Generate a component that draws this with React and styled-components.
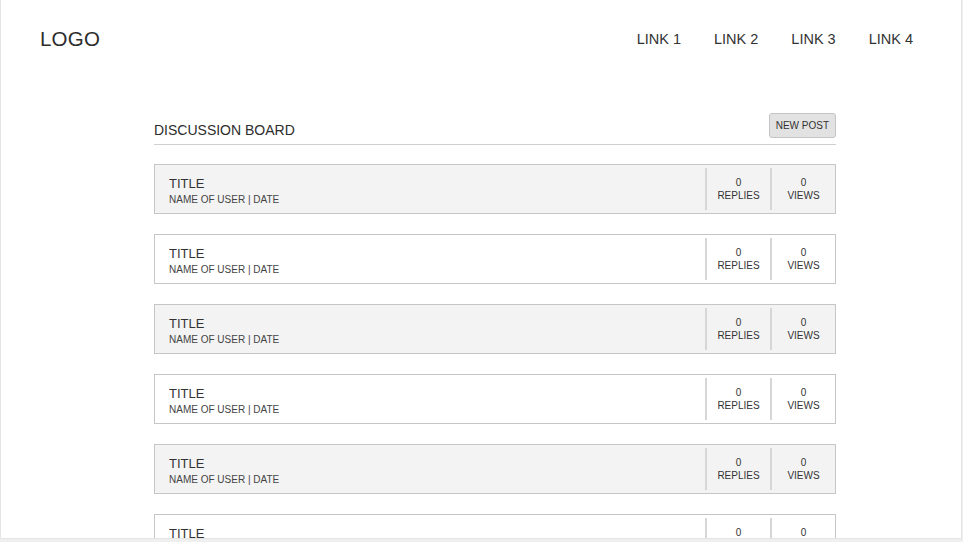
import React from 'react';
import styled, { createGlobalStyle } from 'styled-components';

const GlobalStyle = createGlobalStyle`
  html, body {
    margin: 0;
    padding: 0;
    background: #efefef;
    font-family: "Liberation Sans", Arial, sans-serif;
    color: #333;
  }
`;

const Frame = styled.div`
  width: 960px;
  height: 538px;
  background: #fff;
  border: 1px solid #e4e4e4;
  border-top: none;
  overflow: hidden;
`;

const Header = styled.header`
  display: flex;
  align-items: center;
  justify-content: space-between;
  height: 78px;
  padding: 0 48px 0 39px;
`;

const Logo = styled.div`
  font-size: 20.5px;
  font-weight: 500;
  letter-spacing: 0.2px;
  color: #2d2d2d;
`;

const Nav = styled.nav`
  display: flex;
  gap: 33px;
  margin-top: -1px;
`;

const NavLink = styled.a`
  font-size: 14.5px;
  color: #333;
  text-decoration: none;
`;

const Board = styled.main`
  width: 682px;
  margin: 35px 0 0 153px;
`;

const BoardHead = styled.div`
  display: flex;
  align-items: flex-end;
  justify-content: space-between;
  padding-bottom: 6px;
  border-bottom: 1px solid #cfcfcf;
`;

const BoardTitle = styled.h1`
  margin: 0;
  font-size: 14px;
  font-weight: 500;
  color: #2d2d2d;
`;

const NewPost = styled.button`
  height: 25px;
  padding: 0 6px;
  background: #e2e2e2;
  border: 1px solid #c4c4c4;
  border-radius: 3px;
  font-family: inherit;
  font-size: 10px;
  color: #333;
`;

const List = styled.div`
  display: flex;
  flex-direction: column;
  gap: 20px;
  margin-top: 19px;
`;

const Row = styled.div`
  display: flex;
  height: 48px;
  border: 1px solid #c6c6c6;
  background: ${p => (p.$shaded ? '#f3f3f3' : '#fff')};
  flex-shrink: 0;
`;

const PostInfo = styled.div`
  flex: 1;
  display: flex;
  flex-direction: column;
  justify-content: center;
  padding: 2px 14px 0;
  gap: 3px;
`;

const PostTitle = styled.div`
  font-size: 13px;
  color: #333;
`;

const Meta = styled.div`
  font-size: 10px;
  color: #444;
`;

const Stat = styled.div`
  width: 63px;
  margin: 3px 0;
  border-left: 2px solid #d6d6d6;
  display: flex;
  flex-direction: column;
  align-items: center;
  justify-content: center;
  font-size: 10px;
  line-height: 13px;
  color: #333;
`;

const posts = [0, 1, 2, 3, 4, 5];

export default function App() {
  return (
    <Frame>
      <GlobalStyle />
      <Header>
        <Logo>LOGO</Logo>
        <Nav>
          <NavLink href="#">LINK 1</NavLink>
          <NavLink href="#">LINK 2</NavLink>
          <NavLink href="#">LINK 3</NavLink>
          <NavLink href="#">LINK 4</NavLink>
        </Nav>
      </Header>
      <Board>
        <BoardHead>
          <BoardTitle>DISCUSSION BOARD</BoardTitle>
          <NewPost>NEW POST</NewPost>
        </BoardHead>
        <List>
          {posts.map(i => (
            <Row key={i} $shaded={i % 2 === 0}>
              <PostInfo>
                <PostTitle>TITLE</PostTitle>
                <Meta>NAME OF USER | DATE</Meta>
              </PostInfo>
              <Stat>
                <span>0</span>
                <span>REPLIES</span>
              </Stat>
              <Stat>
                <span>0</span>
                <span>VIEWS</span>
              </Stat>
            </Row>
          ))}
        </List>
      </Board>
    </Frame>
  );
}
